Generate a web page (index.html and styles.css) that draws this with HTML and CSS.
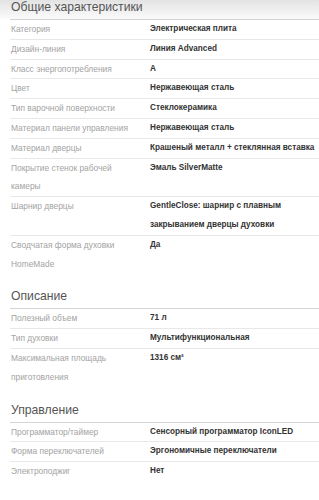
FILE: index.html
```html
<!DOCTYPE html>
<html lang="ru">
<head>
  <meta charset="UTF-8">
  <title>Характеристики</title>
  <link rel="stylesheet" href="styles.css">
</head>
<body>
  <div class="specs">
    <div class="section">
      <h3 class="section-title">Общие характеристики</h3>
      <div class="row"><div class="label">Категория</div><div class="value">Электрическая плита</div></div>
      <div class="row"><div class="label">Дизайн-линия</div><div class="value">Линия Advanced</div></div>
      <div class="row"><div class="label">Класс энергопотребления</div><div class="value">A</div></div>
      <div class="row"><div class="label">Цвет</div><div class="value">Нержавеющая сталь</div></div>
      <div class="row"><div class="label">Тип варочной поверхности</div><div class="value">Стеклокерамика</div></div>
      <div class="row"><div class="label">Материал панели управления</div><div class="value">Нержавеющая сталь</div></div>
      <div class="row"><div class="label">Материал дверцы</div><div class="value">Крашеный металл + стеклянная вставка</div></div>
      <div class="row"><div class="label">Покрытие стенок рабочей камеры</div><div class="value">Эмаль SilverMatte</div></div>
      <div class="row"><div class="label">Шарнир дверцы</div><div class="value">GentleClose: шарнир с плавным закрыванием дверцы духовки</div></div>
      <div class="row"><div class="label">Сводчатая форма духовки HomeMade</div><div class="value">Да</div></div>
    </div>

    <div class="section">
      <h3 class="section-title">Описание</h3>
      <div class="row"><div class="label">Полезный объем</div><div class="value">71 л</div></div>
      <div class="row"><div class="label">Тип духовки</div><div class="value">Мультифункциональная</div></div>
      <div class="row"><div class="label">Максимальная площадь приготовления</div><div class="value">1316 см²</div></div>
    </div>

    <div class="section">
      <h3 class="section-title">Управление</h3>
      <div class="row"><div class="label">Программатор/таймер</div><div class="value">Сенсорный программатор IconLED</div></div>
      <div class="row"><div class="label">Форма переключателей</div><div class="value">Эргономичные переключатели</div></div>
      <div class="row"><div class="label">Электроподжиг</div><div class="value">Нет</div></div>
    </div>
  </div>
</body>
</html>
```

FILE: styles.css
```css
body {
  margin: 0;
  font-family: "Liberation Sans", Arial, sans-serif;
  background: #fff linear-gradient(#e3e3e3, #fbfbfb) no-repeat;
  background-size: 100% 19px;
}

.specs {
  padding-left: 10px;
}

.section {
  margin-top: 15px;
}

.section:first-child {
  margin-top: 0;
}

.section-title {
  margin: 0;
  padding: 0 0 4px 1px;
  font-size: 12.2px;
  line-height: 16px;
  font-weight: normal;
  color: #555;
  border-bottom: 1px solid #d4d4d4;
}

.section:first-child .section-title {
  line-height: 15px;
}

.row {
  display: grid;
  grid-template-columns: 140px 1fr;
  font-size: 8.4px;
  line-height: 18.8px;
  border-bottom: 1px solid #e8e8e8;
}

.row:last-child {
  border-bottom: none;
}

.label {
  padding: 0 15px 0 1px;
  color: #a3a3a3;
}

.value {
  font-size: 8.2px;
  color: #333;
  font-weight: bold;
}
```
